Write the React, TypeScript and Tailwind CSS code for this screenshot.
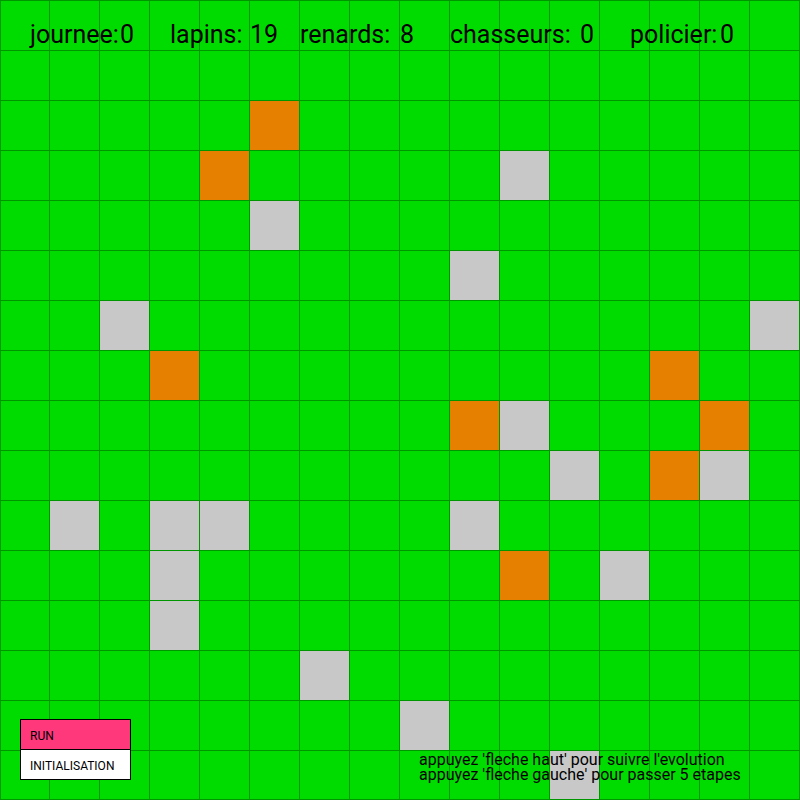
const SIZE = 16;

const RABBITS = [
  [3, 10], [4, 5], [5, 9], [6, 2], [6, 15], [8, 10], [9, 11], [9, 14],
  [10, 1], [10, 3], [10, 4], [10, 9], [11, 3], [11, 12], [12, 3],
  [13, 6], [14, 8], [15, 11],
];

const FOXES = [
  [2, 5], [3, 4], [7, 3], [7, 13], [8, 9], [8, 14], [9, 13], [11, 10],
];

const has = (list: number[][], row: number, col: number) =>
  list.some(([r, c]) => r === row && c === col);

function Cell({ row, col }: { row: number; col: number }) {
  const fill = has(RABBITS, row, col)
    ? "bg-[#c8c8c8]"
    : has(FOXES, row, col)
      ? "bg-[#e68000]"
      : "bg-[#00dc00]";
  const left = col === 0 ? "border-l" : "";
  const bottom = row === SIZE - 1 ? "border-b" : "";
  return (
    <div
      className={`aspect-square border-t border-r border-[#009600] ${fill} ${left} ${bottom}`}
    />
  );
}

function Stat({ label, value, columns }: { label: string; value: number; columns: string }) {
  return (
    <div className={`grid ${columns}`}>
      <dt>{label}</dt>
      <dd>{value}</dd>
    </div>
  );
}

export default function App() {
  return (
    <main className="grid w-full bg-[#00dc00] font-['Roboto','Liberation_Sans',sans-serif] text-black">
      <div className="col-start-1 row-start-1 grid grid-cols-16">
        {Array.from({ length: SIZE * SIZE }, (_, i) => (
          <Cell key={i} row={Math.floor(i / SIZE)} col={i % SIZE} />
        ))}
      </div>

      <div className="z-10 col-start-1 row-start-1 flex flex-col justify-between">
        <dl className="grid grid-cols-[3fr_14fr_13fr_15fr_18fr_17fr] pt-5 text-[25px] leading-[30px] whitespace-nowrap">
          <span />
          <Stat label="journee:" value={0} columns="grid-cols-[9fr_5fr]" />
          <Stat label="lapins:" value={19} columns="grid-cols-[8fr_5fr]" />
          <Stat label="renards:" value={8} columns="grid-cols-[10fr_5fr]" />
          <Stat label="chasseurs:" value={0} columns="grid-cols-[13fr_5fr]" />
          <Stat label="policier:" value={0} columns="grid-cols-[9fr_8fr]" />
        </dl>

        <div className="grid grid-cols-[399fr_361fr] items-start px-5 pb-[18px]">
          <div className="flex w-[111px] flex-col divide-y divide-black border border-black text-[12px] leading-[26px]">
            <button type="button" className="bg-[#ff387c] px-[9px] pt-[3px] text-left">
              RUN
            </button>
            <button type="button" className="bg-white px-[9px] pt-[3px] text-left">
              INITIALISATION
            </button>
          </div>
          <p className="pt-[33px] text-[16px] leading-[15px] whitespace-nowrap">
            appuyez 'fleche haut' pour suivre l'evolution
            <br />
            appuyez 'fleche gauche' pour passer 5 etapes
          </p>
        </div>
      </div>
    </main>
  );
}
